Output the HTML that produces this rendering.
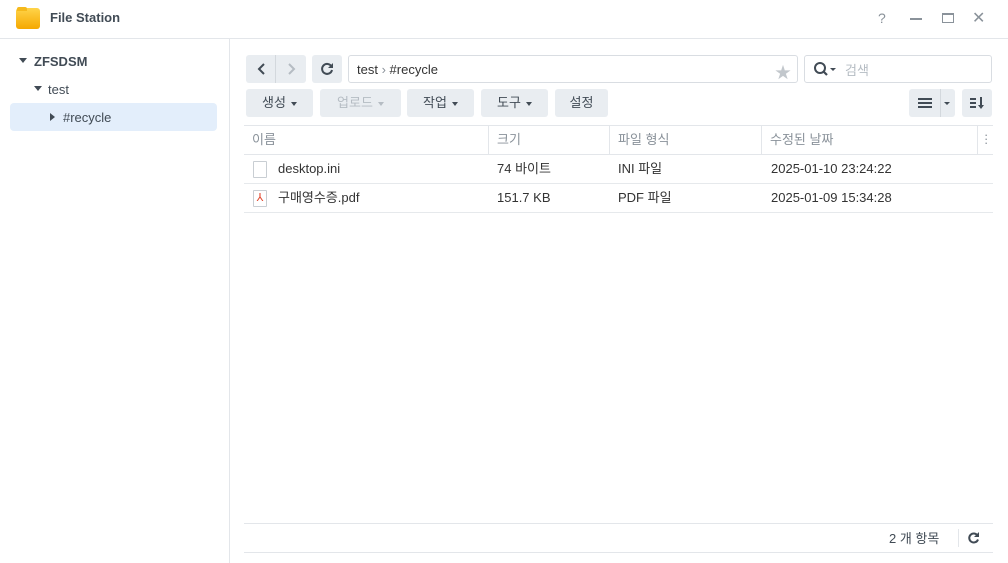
<!DOCTYPE html>
<html><head><meta charset="utf-8"><style>
*{box-sizing:border-box;margin:0;padding:0}
body{width:1008px;height:563px;background:#fff;font-family:"Liberation Sans","Noto Sans CJK KR",sans-serif;color:#333;font-size:13px;position:relative;overflow:hidden}
.a{position:absolute}
.btn{position:absolute;background:#e9edf1;border-radius:3px;height:28px;top:89px;text-align:center;line-height:28px;font-size:13px;color:#414b55}
.car{display:inline-block;width:0;height:0;border-left:3.5px solid transparent;border-right:3.5px solid transparent;border-top:4px solid #414b55;vertical-align:middle;margin-left:5px}
.hd{position:absolute;top:126px;height:28px;line-height:28px;color:#8a929a;font-size:13px;padding-left:8px;border-right:1px solid #e3e6ea}
.row{position:absolute;left:244px;width:749px;height:29px;border-bottom:1px solid #e6e9ec;line-height:28px;font-size:13px;color:#333}
.row span{position:absolute}
</style></head><body>
<div class="a" style="left:16px;top:8px;width:24px;height:21px;border-radius:3px;background:linear-gradient(#ffd44a,#f5a800)"></div>
<div class="a" style="left:17px;top:7px;width:10px;height:4px;background:#f5b91c;border-radius:2px 2px 0 0"></div>
<div class="a" style="left:50px;top:10px;font-weight:bold;font-size:13px;color:#414b55">File Station</div>
<div class="a" style="left:878px;top:10px;font-size:14px;color:#8a929a">?</div>
<div class="a" style="left:910px;top:18px;width:12px;height:2px;background:#8a929a"></div>
<div class="a" style="left:942px;top:13px;width:12px;height:10px;border:1.5px solid #8a929a;border-top-width:2.5px"></div>
<div class="a" style="left:972px;top:8px;font-size:16px;color:#8a929a">✕</div>
<div class="a" style="left:0;top:38px;width:1008px;height:1px;background:#e3e6ea"></div>
<div class="a" style="left:229px;top:39px;width:1px;height:524px;background:#e3e6ea"></div>
<div class="a" style="left:19px;top:58px;border-left:4px solid transparent;border-right:4px solid transparent;border-top:5px solid #414b55"></div>
<div class="a" style="left:34px;top:54px;font-weight:bold;color:#414b55">ZFSDSM</div>
<div class="a" style="left:34px;top:86px;border-left:4px solid transparent;border-right:4px solid transparent;border-top:5px solid #414b55"></div>
<div class="a" style="left:48px;top:82px;color:#414b55">test</div>
<div class="a" style="left:10px;top:103px;width:207px;height:28px;background:#e3eefb;border-radius:4px"></div>
<div class="a" style="left:50px;top:113px;border-top:4px solid transparent;border-bottom:4px solid transparent;border-left:5px solid #414b55"></div>
<div class="a" style="left:63px;top:110px;color:#414b55">#recycle</div>
<div class="a" style="left:246px;top:55px;width:60px;height:28px;background:#e9edf1;border-radius:3px"></div>
<div class="a" style="left:275px;top:55px;width:1px;height:28px;background:#d3d8dd"></div>
<svg class="a" style="left:246px;top:55px" width="60" height="28"><path d="M18 9 L13 14 L18 19" stroke="#414b55" stroke-width="2" fill="none"/><path d="M43 9 L48 14 L43 19" stroke="#b5bcc3" stroke-width="2" fill="none"/></svg>
<div class="a" style="left:312px;top:55px;width:30px;height:28px;background:#e9edf1;border-radius:3px"></div>
<svg class="a" style="left:312px;top:55px" width="30" height="28"><path d="M19.5 11.5 A5 5 0 1 0 20 15" stroke="#414b55" stroke-width="2" fill="none"/><path d="M21 8 L21 13 L16 13 Z" fill="#414b55"/></svg>
<div class="a" style="left:348px;top:55px;width:450px;height:28px;border:1px solid #d9dde2;border-radius:3px"></div>
<div class="a" style="left:357px;top:62px;color:#333">test <span style="color:#8a929a">›</span> #recycle</div>
<div class="a" style="left:775px;top:59px;font-size:16px;color:#c2c7cc">★</div>
<div class="a" style="left:804px;top:55px;width:188px;height:28px;border:1px solid #d9dde2;border-radius:3px"></div>
<svg class="a" style="left:812px;top:60px" width="30" height="18"><circle cx="8" cy="8" r="5" stroke="#414b55" stroke-width="2" fill="none"/><path d="M11.5 11.5 L15 15" stroke="#414b55" stroke-width="2.2"/><path d="M18 8 L24 8 L21 11 Z" fill="#414b55"/></svg>
<div class="a" style="left:845px;top:60px;color:#b5bcc3">검색</div>
<div class="btn" style="left:246px;width:67px">생성<span class="car"></span></div>
<div class="btn" style="left:320px;width:81px;color:#b5bcc3">업로드<span class="car" style="border-top-color:#b5bcc3"></span></div>
<div class="btn" style="left:407px;width:67px">작업<span class="car"></span></div>
<div class="btn" style="left:481px;width:67px">도구<span class="car"></span></div>
<div class="btn" style="left:555px;width:53px">설정</div>
<div class="btn" style="left:909px;width:46px"></div>
<div class="a" style="left:940px;top:89px;width:1px;height:28px;background:#d3d8dd"></div>
<svg class="a" style="left:909px;top:89px" width="46" height="28"><path d="M9 10h14M9 14h14M9 18h14" stroke="#414b55" stroke-width="2"/><path d="M35 13 L41 13 L38 16Z" fill="#414b55"/></svg>
<div class="btn" style="left:962px;width:30px"></div>
<svg class="a" style="left:962px;top:89px" width="30" height="28"><path d="M8 10h6M8 14h6M8 18h6" stroke="#414b55" stroke-width="2"/><path d="M19 8v10" stroke="#414b55" stroke-width="2"/><path d="M16 16 L22 16 L19 20Z" fill="#414b55"/></svg>
<div class="a" style="left:244px;top:125px;width:749px;height:1px;background:#e3e6ea"></div>
<div class="hd" style="left:244px;width:245px">이름</div>
<div class="hd" style="left:489px;width:121px">크기</div>
<div class="hd" style="left:610px;width:152px">파일 형식</div>
<div class="hd" style="left:762px;width:216px">수정된 날짜</div>
<div class="a" style="left:984px;top:133px;color:#8a929a;font-size:13px;line-height:4px">·<br>·<br>·</div>
<div class="a" style="left:244px;top:154px;width:749px;height:1px;background:#e3e6ea"></div>
<div class="row" style="top:155px"><span style="left:9px;top:6px;width:14px;height:17px;border:1px solid #c9ced3;border-radius:1px"></span><span style="left:34px">desktop.ini</span><span style="left:253px">74 바이트</span><span style="left:374px">INI 파일</span><span style="left:527px">2025-01-10 23:24:22</span></div>
<div class="row" style="top:184px"><span style="left:9px;top:6px;width:14px;height:17px;border:1px solid #c9ced3;border-radius:1px;color:#e2462d;font-size:11px;line-height:15px;text-align:center">⅄</span><span style="left:34px">구매영수증.pdf</span><span style="left:253px">151.7 KB</span><span style="left:374px">PDF 파일</span><span style="left:527px">2025-01-09 15:34:28</span></div>
<div class="a" style="left:244px;top:523px;width:749px;height:1px;background:#e3e6ea"></div>
<div class="a" style="left:244px;top:552px;width:749px;height:1px;background:#e3e6ea"></div>
<div class="a" style="left:889px;top:528px;color:#414b55">2 개 항목</div>
<div class="a" style="left:958px;top:529px;width:1px;height:18px;background:#e3e6ea"></div>
<svg class="a" style="left:966px;top:530px" width="16" height="16"><path d="M11.5 5.5 A4.5 4.5 0 1 0 12 9.5" stroke="#414b55" stroke-width="2" fill="none"/><path d="M13 2 L13 7 L8 7 Z" fill="#414b55"/></svg>
</body></html>
